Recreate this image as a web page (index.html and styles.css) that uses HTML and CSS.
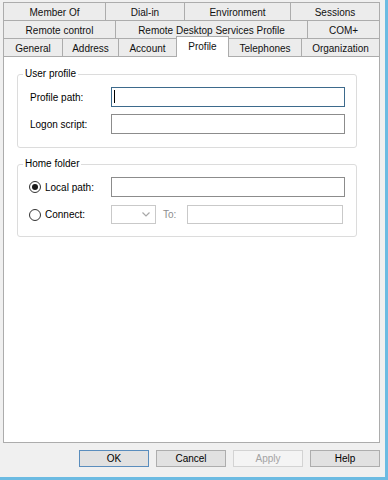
FILE: index.html
```html
<!DOCTYPE html>
<html lang="en">
<head>
    <meta charset="UTF-8">
    <meta name="viewport" content="width=device-width, initial-scale=1.0">
    <title>User Properties - Profile</title>
    <link rel="stylesheet" href="styles.css">
</head>
<body>
    <div class="window">
        <div class="tabs">
            <div class="tab-row row-1">
                <div class="tab">Member Of</div>
                <div class="tab">Dial-in</div>
                <div class="tab">Environment</div>
                <div class="tab">Sessions</div>
            </div>
            <div class="tab-row row-2">
                <div class="tab">Remote control</div>
                <div class="tab">Remote Desktop Services Profile</div>
                <div class="tab">COM+</div>
            </div>
            <div class="tab-row row-3">
                <div class="tab">General</div>
                <div class="tab">Address</div>
                <div class="tab">Account</div>
                <div class="tab active">Profile</div>
                <div class="tab">Telephones</div>
                <div class="tab">Organization</div>
            </div>
        </div>

        <div class="panel">
            <fieldset class="group">
                <legend>User profile</legend>
                <div class="field-row">
                    <label for="profilePath">Profile path:</label>
                    <div class="input-wrap focused">
                        <input type="text" id="profilePath" class="text-box">
                    </div>
                </div>
                <div class="field-row">
                    <label for="logonScript">Logon script:</label>
                    <input type="text" id="logonScript" class="text-box">
                </div>
            </fieldset>

            <fieldset class="group home">
                <legend>Home folder</legend>
                <div class="field-row">
                    <label class="radio"><input type="radio" name="home" checked><span>Local path:</span></label>
                    <input type="text" class="text-box">
                </div>
                <div class="field-row">
                    <label class="radio"><input type="radio" name="home"><span>Connect:</span></label>
                    <div class="connect">
                        <div class="combo">
                            <svg width="8" height="5" viewBox="0 0 8 5"><path d="M0.5 0.5 L4 4 L7.5 0.5" fill="none" stroke="#a8a8a8" stroke-width="1.2"/></svg>
                        </div>
                        <span class="to">To:</span>
                        <input type="text" class="text-box" disabled>
                    </div>
                </div>
            </fieldset>
        </div>

        <div class="buttons">
            <button type="button" class="default">OK</button>
            <button type="button">Cancel</button>
            <button type="button" disabled>Apply</button>
            <button type="button">Help</button>
        </div>
    </div>
</body>
</html>
```

FILE: styles.css
```css
* {
    box-sizing: border-box;
}

body {
    margin: 0;
    background-color: #f0f0f0;
    font-family: "Liberation Sans", Arial, sans-serif;
    font-size: 10px;
    color: #000;
}

.window {
    width: 388px;
    height: 480px;
    padding: 2px 0 0 3px;
    border-right: 3px solid #6cbbe2;
    border-bottom: 3px solid #6cbbe2;
}

/* tabs */
.tabs {
    width: 377px;
}

.tab-row {
    display: grid;
    height: 18px;
}

.row-1 {
    grid-template-columns: 102px 79px 106px 90px;
}

.row-2 {
    grid-template-columns: 112px 192px 73px;
}

.row-3 {
    grid-template-columns: 59px 56px 58px 53px 72px 79px;
}

.tab {
    display: flex;
    align-items: center;
    justify-content: center;
    padding-top: 1px;
    background-color: #ececec;
    border-top: 1px solid #acacac;
    border-left: 1px solid #acacac;
    color: #111;
    white-space: nowrap;
}

.tab:last-child {
    border-right: 1px solid #acacac;
}

.tab.active {
    position: relative;
    z-index: 1;
    margin: -2px 0 -1px;
    padding: 0 0 2px;
    background-color: #fff;
    border-right: 1px solid #acacac;
}

.tab.active + .tab {
    border-left: none;
}

/* panel */
.panel {
    width: 377px;
    height: 387px;
    padding: 11px 0 0 13px;
    background-color: #fff;
    border: 1px solid #acacac;
}

.group {
    width: 340px;
    margin: 0;
    padding: 7px 0 13px 12px;
    border: 1px solid #dcdcdc;
    border-radius: 3px;
    min-width: 0;
}

.group legend {
    margin-left: -7px;
    padding: 0 2px;
    line-height: 12px;
}

.group.home {
    margin-top: 10px;
    padding-bottom: 12px;
}

.field-row {
    display: grid;
    grid-template-columns: 81px 234px;
    align-items: center;
    height: 20px;
}

.field-row + .field-row {
    margin-top: 7px;
}

.home .field-row + .field-row {
    margin-top: 8px;
    height: 19px;
}

.text-box {
    width: 234px;
    height: 20px;
    margin: 0;
    padding: 0 3px;
    border: 1px solid #8c8c8c;
    background-color: #fff;
    font: inherit;
    outline: none;
}

.home .field-row + .field-row .text-box {
    height: 19px;
}

.text-box:disabled {
    border-color: #c9c9c9;
}

.input-wrap {
    position: relative;
}

.input-wrap.focused .text-box {
    border-color: #3d6a8c;
}

/* fake text caret */
.input-wrap.focused::after {
    content: "";
    position: absolute;
    left: 3px;
    top: 3px;
    width: 1px;
    height: 13px;
    background-color: #000;
}

.radio {
    display: flex;
    align-items: center;
    margin-left: -1px;
}

.radio input {
    appearance: none;
    width: 12px;
    height: 12px;
    margin: 0 4px 0 0;
    border: 1px solid #333;
    border-radius: 50%;
    background-color: #fff;
    display: grid;
    place-items: center;
}

.radio input:checked::before {
    content: "";
    width: 6px;
    height: 6px;
    border-radius: 50%;
    background-color: #1a1a1a;
}

.connect {
    display: flex;
    align-items: center;
}

.combo {
    width: 45px;
    height: 19px;
    margin-right: 7px;
    padding-right: 5px;
    display: flex;
    align-items: center;
    justify-content: flex-end;
    background-color: #fff;
    border: 1px solid #c9c9c9;
}

.to {
    width: 24px;
    color: #8d8d8d;
}

.connect .text-box {
    width: 156px;
}

/* dialog buttons */
.buttons {
    width: 377px;
    margin-top: 7px;
    display: flex;
    justify-content: flex-end;
    gap: 7px;
}

button {
    width: 70px;
    height: 17px;
    padding: 0;
    background-color: #e1e1e1;
    border: 1px solid #adadad;
    font: inherit;
    color: #000;
}

button.default {
    border-color: #5a8dbd;
}

button:disabled {
    background-color: #f4f4f4;
    border-color: #d3d3d3;
    color: #a3a3a3;
}
```
